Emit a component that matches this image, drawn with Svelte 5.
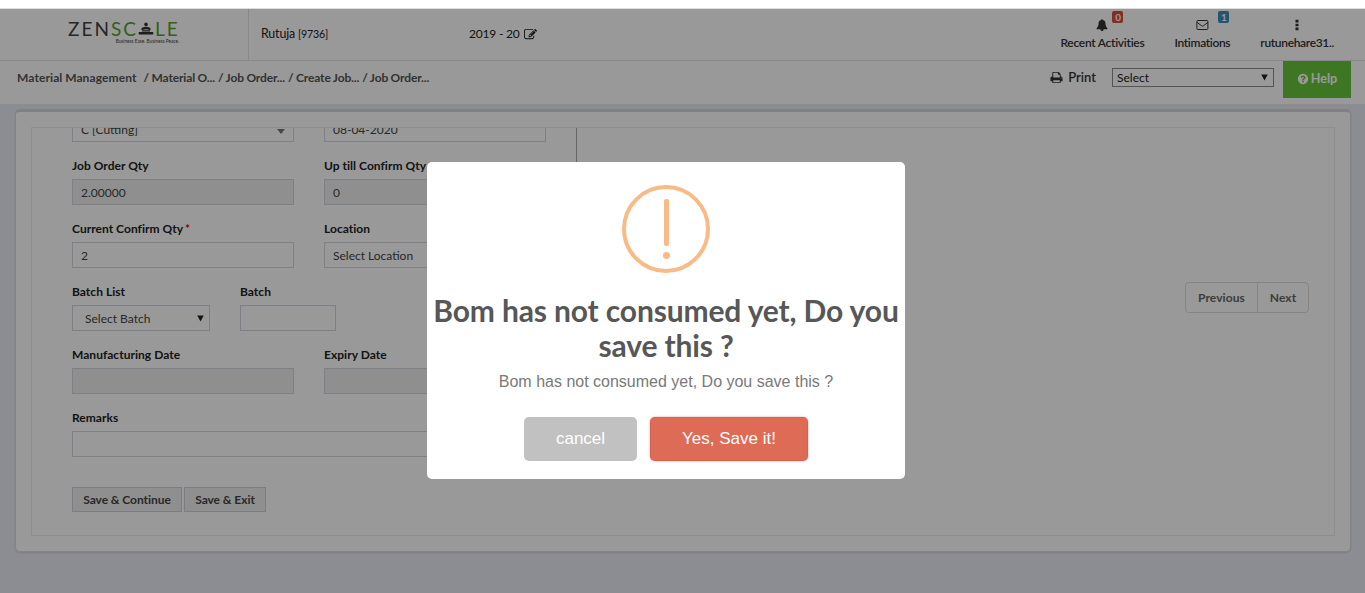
<script>
	const crumbs = ['Material O...', 'Job Order...', 'Create Job...', 'Job Order...'];

	const icons = {
		edit: 'M888 1184l116-116-152-152-116 116v56h96v96h56zm440-720q-16-16-33 1l-350 350q-17 17-1 33t33-1l350-350q17-17 1-33zm80 594v190q0 119-84.5 203.5t-203.5 84.5h-832q-119 0-203.5-84.5t-84.5-203.5v-832q0-119 84.5-203.5t203.5-84.5h832q63 0 117 25 15 7 18 23 3 17-9 29l-49 49q-14 14-32 8-23-6-45-6h-832q-66 0-113 47t-47 113v832q0 66 47 113t113 47h832q66 0 113-47t47-113v-126q0-13 9-22l64-64q15-15 35-7t20 29zm-96-738l288 288-672 672h-288v-288zm444 132l-92 92-288-288 92-92q28-28 68-28t68 28l152 152q28 28 28 68t-28 68z',
		bell: 'M912 1696q0-16-16-16-59 0-101.5-42.5t-42.5-101.5q0-16-16-16t-16 16q0 73 51.5 124.5t124.5 51.5q16 0 16-16zm816-288q0 52-38 90t-90 38h-448q0 106-75 181t-181 75-181-75-75-181h-448q-52 0-90-38t-38-90q50-42 91-88t85-119.5 74.5-158.5 50-206 19.5-260q0-152 117-282.5t307-158.5q-8-19-8-39 0-40 28-68t68-28 68 28 28 68q0 20-8 39 190 28 307 158.5t117 282.5q0 139 19.5 260t50 206 74.5 158.5 85 119.5 91 88z',
		print: 'M448 1536h896v-256h-896v256zm0-640h896v-384h-160q-40 0-68-28t-28-68v-160h-640v640zm1152 64q0-26-19-45t-45-19-45 19-19 45 19 45 45 19 45-19 19-45zm128 0v416q0 13-9.5 22.5t-22.5 9.5h-224v160q0 40-28 68t-68 28h-960q-40 0-68-28t-28-68v-160h-224q-13 0-22.5-9.5t-9.5-22.5v-416q0-79 56.5-135.5t135.5-56.5h64v-544q0-40 28-68t68-28h672q40 0 88 20t76 48l152 152q28 28 48 76t20 88v256h64q79 0 135.5 56.5t56.5 135.5z',
		help: 'M1024 1376v-192q0-14-9-23t-23-9h-192q-14 0-23 9t-9 23v192q0 14 9 23t23 9h192q14 0 23-9t9-23zm256-672q0-88-55.5-163t-138.5-116-170-41q-243 0-371 213-15 24 8 42l132 100q7 6 19 6 16 0 25-12 53-68 86-92 34-24 86-24 48 0 85.5 26t37.5 59q0 38-20 61t-68 45q-63 28-115.5 86.5t-52.5 125.5v36q0 14 9 23t23 9h192q14 0 23-9t9-23q0-19 21.5-49.5t54.5-49.5q32-18 49-28.5t46-35 44.5-48 28-60.5 12.5-81zm384 192q0 209-103 385.5t-279.5 279.5-385.5 103-385.5-103-279.5-279.5-103-385.5 103-385.5 279.5-279.5 385.5-103 385.5 103 279.5 279.5 103 385.5z'
	};
</script>

{#snippet icon(name, size)}
	<svg class="icon" viewBox="0 0 1792 1792" width={size} height={size}><path d={icons[name]} /></svg>
{/snippet}

{#snippet arrow()}
	<svg class="arrow" viewBox="0 0 8 7" width="7" height="7"><path d="M0.3 0H7.7L4 7z" /></svg>
{/snippet}

{#snippet field(label, value, disabled = false, required = false)}
	<div class="field">
		<div class="label">{label}{#if required}<em>*</em>{/if}</div>
		<div class="input" class:disabled>{value}</div>
	</div>
{/snippet}

<div class="screen">
	<div class="app">
		<header>
			<div class="brand">
				<div class="logo">
					<div class="word">
						<span class="dark">ZEN</span><span class="green">SC</span>
						<svg viewBox="0 0 16 13" width="16" height="13">
							<circle cx="8" cy="2.4" r="1.8" />
							<path d="M3 7.6q.8-2.8 5-2.8t5 2.8l-1.8.3q-3.2-1.2-6.4 0z" />
							<path d="M4 8.3h8v1.2H4zM1.4 10h13.2q.8 0 .8 1.2t-.8 1.2H1.4q-.8 0-.8-1.2t.8-1.2z" />
						</svg>
						<span class="green">LE</span>
					</div>
					<div class="tagline">Business Ease. Business Peace.</div>
				</div>
			</div>
			<div class="user">Rutuja <small>[9736]</small></div>
			<div class="year">2019 - 20 {@render icon('edit', 13)}</div>
			<nav>
				<div class="item recent">
					{@render icon('bell', 12)}
					<b class="badge red">0</b>
					<span>Recent Activities</span>
				</div>
				<div class="item mail">
					<svg viewBox="0 0 13 12" width="13" height="12" fill="none" stroke="#333"><rect x=".9" y="1.5" width="11" height="9" rx="1" /><path d="M1 3.3 5.4 6.7q1.1.8 2.2 0L12 3.3" /></svg>
					<b class="badge blue">1</b>
					<span>Intimations</span>
				</div>
				<div class="item more">
					<svg class="icon" viewBox="0 0 4 12" width="4" height="12"><path d="M.5.8h3v2.6h-3zM.5 4.7h3v2.6h-3zM.5 8.6h3v2.6h-3z" /></svg>
					<span>rutunehare31..</span>
				</div>
			</nav>
		</header>

		<div class="toolbar">
			<div class="crumbs"><span class="first">Material Management</span>{#each crumbs as crumb}<span>/ {crumb}</span>{/each}</div>
			<div class="print">{@render icon('print', 13)}<span>Print</span></div>
			<div class="select">Select {@render arrow()}</div>
			<div class="help">{@render icon('help', 12)}<span>Help</span></div>
		</div>

		<main>
			<div class="panel">
				<div class="form">
					<div class="row first-row">
						<div class="input">C [Cutting] <svg class="caret" viewBox="0 0 8 5" width="8" height="5"><path d="M0 0h8L4 5z" /></svg></div>
						<div class="input">08-04-2020</div>
					</div>
					<div class="row">
						{@render field('Job Order Qty', '2.00000', true)}
						{@render field('Up till Confirm Qty', '0', true)}
					</div>
					<div class="row">
						{@render field('Current Confirm Qty', '2', false, true)}
						{@render field('Location', 'Select Location')}
					</div>
					<div class="row batch">
						<div class="field list">
							<div class="label">Batch List</div>
							<div class="input">Select Batch {@render arrow()}</div>
						</div>
						{@render field('Batch', '')}
					</div>
					<div class="row">
						{@render field('Manufacturing Date', '', true)}
						{@render field('Expiry Date', '', true)}
					</div>
					<div class="row">
						{@render field('Remarks', '')}
					</div>
					<div class="actions">
						<button class="continue">Save & Continue</button>
						<button class="exit">Save & Exit</button>
					</div>
				</div>
				<div class="side">
					<div class="pager"><span>Previous</span><span>Next</span></div>
				</div>
			</div>
		</main>

		<div class="overlay"></div>
	</div>

	<div class="modal">
		<div class="warning"><i class="bar"></i><i class="dot"></i></div>
		<h2>Bom has not consumed yet, Do you save this ?</h2>
		<p>Bom has not consumed yet, Do you save this ?</p>
		<div class="buttons">
			<button class="cancel">cancel</button>
			<button class="confirm">Yes, Save it!</button>
		</div>
	</div>
</div>

<style>
	:global(body) {
		margin: 0;
		background: #fff;
	}

	.screen {
		position: relative;
		width: 1365px;
		height: 593px;
		padding-top: 9px;
		box-sizing: border-box;
		overflow: hidden;
		font: 13px/18px Lato, sans-serif;
		color: #222;
	}

	.app {
		position: relative;
		height: 584px;
		background: #eaebf3;
		box-shadow: 0 -1px 0 #ddd;
	}

	.overlay {
		position: absolute;
		inset: 0;
		background: rgba(0, 0, 0, 0.4);
	}

	.icon {
		fill: currentColor;
		flex: none;
	}

	header {
		display: flex;
		height: 51px;
		background: #fff;
		border-bottom: 1px solid #e4e4e4;
	}

	.brand {
		width: 180px;
		padding: 10px 0 0 68px;
		border-right: 1px solid #e4e4e4;
	}

	.logo {
		width: 111px;
	}

	.word {
		display: flex;
		align-items: center;
		height: 19px;
		font: 400 19px/19px Lato, sans-serif;
		letter-spacing: 2px;
	}

	.dark {
		color: #444;
	}

	.green {
		color: #55a02e;
	}

	.word svg {
		fill: #333;
		flex: none;
		margin-right: 1px;
	}

	.tagline {
		font: 4.7px/6px Lato, sans-serif;
		text-align: right;
		color: #444;
		white-space: nowrap;
	}

	.user {
		width: 208px;
		padding: 16px 0 0 12px;
		box-sizing: border-box;
		font-size: 12.4px;
		letter-spacing: -0.15px;
	}

	.user small {
		font-size: 10.6px;
	}

	.year {
		display: flex;
		align-items: center;
		gap: 4px;
		height: 18px;
		padding: 16px 0 0 12px;
		font-size: 12px;
		letter-spacing: -0.2px;
	}

	nav {
		display: flex;
		margin-left: auto;
		padding-right: 31px;
		gap: 30px;
		color: #333;
		font-weight: 600;
		font-size: 12px;
		letter-spacing: -0.33px;
	}

	.item {
		position: relative;
		display: flex;
		flex-direction: column;
		align-items: center;
		padding-top: 10px;
	}

	.item span {
		margin-top: 3px;
	}

	.recent {
		letter-spacing: -0.27px;
	}

	.badge {
		position: absolute;
		top: 2px;
		left: calc(50% + 10px);
		width: 11px;
		height: 12px;
		border-radius: 2px;
		color: #fff;
		font: 700 10px/12px Lato, sans-serif;
		text-align: center;
	}

	.mail .badge {
		left: calc(50% + 16px);
	}

	.red {
		background: #dd4b39;
	}

	.blue {
		background: #3c8dbc;
	}

	.toolbar {
		display: flex;
		height: 43px;
		background: #fff;
		padding: 0 14px 0 17px;
	}

	.crumbs {
		display: flex;
		gap: 3px;
		padding-top: 8px;
		color: #555;
		font-size: 12px;
		font-weight: 700;
		letter-spacing: -0.13px;
		word-spacing: -0.3px;
	}

	.first {
		margin-right: 4px;
		letter-spacing: 0.1px;
	}

	.print {
		display: flex;
		align-items: center;
		gap: 5px;
		height: 18px;
		margin: 7px 16px 0 auto;
		color: #333;
		font-weight: 600;
	}

	.select {
		display: flex;
		align-items: center;
		justify-content: space-between;
		width: 162px;
		height: 19px;
		box-sizing: border-box;
		margin: 7px 9px 0 0;
		padding: 0 5px 0 4px;
		border: 1px solid #8c8c8c;
		font-size: 12px;
	}

	.arrow {
		fill: #222;
		margin-top: -1px;
	}

	.help {
		display: flex;
		align-items: center;
		justify-content: center;
		gap: 2px;
		width: 68px;
		height: 37px;
		padding-bottom: 1px;
		box-sizing: border-box;
		background: #69c53d;
		color: #fff;
		font-size: 12.6px;
		font-weight: 700;
	}

	main {
		height: 443px;
		margin: 5px 14px 0 15px;
		padding: 15px 15px 0;
		box-sizing: border-box;
		background: #fff;
		border: 1px solid #dcdde1;
		border-top: 3px solid #d6d7da;
		border-radius: 5px;
		box-shadow: 0 1px 2px rgba(0, 0, 0, 0.12);
	}

	.panel {
		display: flex;
		height: 409px;
		box-sizing: border-box;
		border: 1px solid #ececec;
		overflow: hidden;
	}

	.form {
		width: 474px;
		padding-left: 40px;
	}

	.row {
		display: flex;
		gap: 30px;
		height: 63px;
		box-sizing: border-box;
		padding-top: 15px;
	}

	.first-row {
		height: 14px;
		padding: 0;
		align-items: flex-end;
	}

	.row > :global(*) {
		flex: 1;
	}

	.batch .list {
		flex: 0 0 138px;
	}

	.batch .field:last-child {
		flex: 0 0 96px;
	}

	.label {
		height: 22px;
		font-size: 12px;
		font-weight: 700;
		letter-spacing: 0.03px;
	}

	.label em {
		margin-left: 2px;
		color: #e00;
		font-style: normal;
	}

	.input {
		display: flex;
		align-items: center;
		justify-content: space-between;
		height: 26px;
		box-sizing: border-box;
		padding: 1px 8px 0;
		border: 1px solid #d2d6e0;
		color: #444;
		font-size: 12px;
	}

	.disabled {
		background: #eee;
	}

	.list .input {
		padding: 1px 5px 0 12px;
	}

	.caret {
		fill: #777;
		margin-top: 4px;
	}

	.actions {
		display: flex;
		gap: 2px;
		padding-top: 30px;
	}

	.actions button {
		height: 25px;
		padding: 0;
		border: 1px solid #ccd0da;
		background: #efefef;
		color: #444;
		font: 700 12px/23px Lato, sans-serif;
		letter-spacing: -0.05px;
	}

	.continue {
		width: 110px;
	}

	.exit {
		width: 82px;
	}

	.side {
		flex: 1;
		display: flex;
		justify-content: flex-end;
		height: 310px;
		margin-left: 30px;
		padding: 154px 25px 0 0;
		box-sizing: border-box;
		border-left: 1px solid #aaa;
	}

	.pager {
		display: flex;
		height: 29px;
		border: 1px solid #ddd;
		border-radius: 4px;
		color: #666;
		font: 700 12px/29px Lato, sans-serif;
		letter-spacing: 0.1px;
	}

	.pager span {
		width: 71px;
		text-align: center;
	}

	.pager span + span {
		width: 50px;
		border-left: 1px solid #ddd;
	}

	.modal {
		position: absolute;
		left: 427px;
		top: 162px;
		width: 478px;
		height: 317px;
		border-radius: 5px;
		background: #fff;
		text-align: center;
	}

	.warning {
		display: flex;
		flex-direction: column;
		align-items: center;
		width: 80px;
		height: 80px;
		margin: 23px auto 0;
		border: 4px solid #f8bb86;
		border-radius: 50%;
	}

	.bar {
		width: 5px;
		height: 47px;
		margin-top: 10px;
		border-radius: 2px;
		background: #f8bb86;
	}

	.dot {
		width: 7px;
		height: 7px;
		margin-top: 6px;
		border-radius: 50%;
		background: #f8bb86;
	}

	h2 {
		margin: 20px 0 0;
		font: 700 30px/35px Lato, sans-serif;
		letter-spacing: -0.14px;
		color: #575757;
	}

	p {
		margin: 9px 0 0;
		font: 300 16px/20px 'Liberation Sans', Arial, sans-serif;
		color: #797979;
	}

	.buttons {
		display: flex;
		justify-content: center;
		gap: 13px;
		margin-top: 25px;
	}

	.buttons button {
		height: 44px;
		padding: 0 0 1px;
		border: 0;
		border-radius: 5px;
		color: #fff;
		font: 500 17px 'Liberation Sans', Arial, sans-serif;
	}

	.cancel {
		width: 113px;
		background: #c1c1c1;
	}

	.confirm {
		width: 158px;
		background: #dd6b55;
		box-shadow: 0 0 2px rgba(221, 107, 85, 0.8), inset 0 0 0 1px rgba(0, 0, 0, 0.05);
	}
</style>
